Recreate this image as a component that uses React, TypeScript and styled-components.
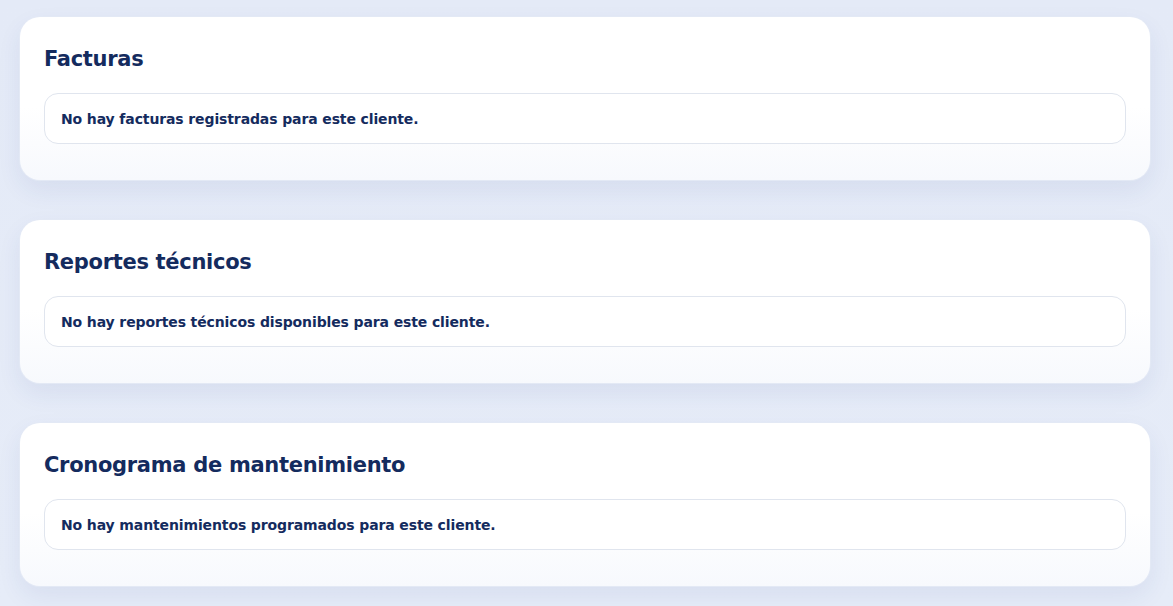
import React from "react";
import styled, { createGlobalStyle } from "styled-components";

const GlobalStyle = createGlobalStyle`
  html, body {
    margin: 0;
    padding: 0;
    background: #e6ecf8;
  }
  body {
    font-family: "DejaVu Sans", Verdana, sans-serif;
  }
`;

const Page = styled.main`
  min-height: 606px;
  box-sizing: border-box;
  padding: 17px 23px 20px 20px;
  display: flex;
  flex-direction: column;
  gap: 40px;
  background: linear-gradient(180deg, #e4eaf7 0%, #e6ecf8 100%);
`;

const Card = styled.section`
  box-sizing: border-box;
  height: 163px;
  padding: 28px 24px 36px;
  border-radius: 20px;
  background: linear-gradient(180deg, #ffffff 0%, #ffffff 55%, #f7f9fd 100%);
  box-shadow: 0 0 0 1px #e3e9f5, 0 10px 24px rgba(40, 70, 140, 0.08);
  display: flex;
  flex-direction: column;
`;

const Title = styled.h2`
  margin: 0 0 20px;
  font-family: "DejaVu Sans", Verdana, sans-serif;
  font-size: 21px;
  line-height: 28px;
  font-weight: 700;
  color: #142b5e;
  letter-spacing: -0.3px;
`;

const EmptyBox = styled.div`
  box-sizing: border-box;
  height: 51px;
  display: flex;
  align-items: center;
  padding: 0 16px;
  border-radius: 14px;
  border: 1px solid #e0e5ee;
  background: #ffffff;
  font-size: 14px;
  font-weight: 700;
  letter-spacing: -0.12px;
  color: #142b5e;
`;

const sections = [
  { title: "Facturas", empty: "No hay facturas registradas para este cliente." },
  { title: "Reportes técnicos", empty: "No hay reportes técnicos disponibles para este cliente." },
  { title: "Cronograma de mantenimiento", empty: "No hay mantenimientos programados para este cliente." },
];

export default function App() {
  return (
    <>
      <GlobalStyle />
      <Page>
        {sections.map((s) => (
          <Card key={s.title}>
            <Title>{s.title}</Title>
            <EmptyBox>{s.empty}</EmptyBox>
          </Card>
        ))}
      </Page>
    </>
  );
}
